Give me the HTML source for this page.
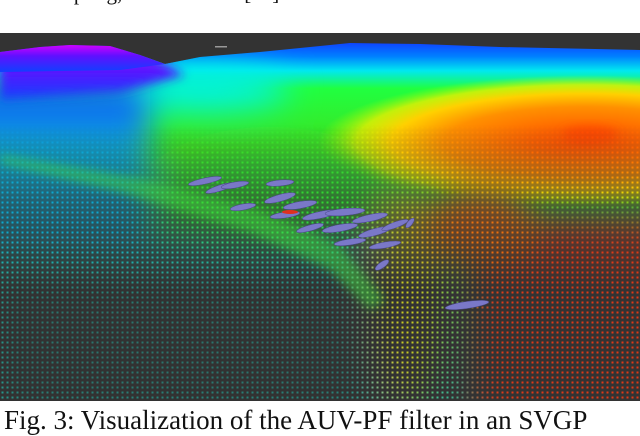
<!DOCTYPE html>
<html><head><meta charset="utf-8"><style>
html,body{margin:0;padding:0;background:#fff;width:640px;height:426px;overflow:hidden}
.t{position:absolute;left:4px;font-family:"Liberation Serif",serif;color:#111;white-space:nowrap}
svg{position:absolute;left:0;top:33px}
</style></head><body>
<div class="t" style="top:-19px;left:-6px;font-size:21px">local sampling, introduced in [15].</div>
<svg width="640" height="368" viewBox="0 33 640 368">
<defs>
<filter id="b" x="-50%" y="-50%" width="200%" height="200%"><feGaussianBlur stdDeviation="16"/></filter>
<filter id="b2" x="-50%" y="-50%" width="200%" height="200%"><feGaussianBlur stdDeviation="5"/></filter>
<clipPath id="s"><path d="M0 52 L40 47 L70 45 L110 46 L140 55 L165 64 L200 57 L260 52 L350 43 L420 44 L500 47 L640 50 L640 401 L0 401Z"/></clipPath>
<pattern id="dk" width="5" height="5" patternUnits="userSpaceOnUse"><path d="M0 0H5V5H0Z M1.5 1.5V3.5H3.5V1.5Z" fill="#333" fill-rule="evenodd"/></pattern>
<linearGradient id="mg" x1="0" y1="0" x2="0" y2="1" gradientUnits="objectBoundingBox"><stop offset="0" stop-color="#000"/><stop offset="0.25" stop-color="#000"/><stop offset="0.45" stop-color="#999"/><stop offset="0.7" stop-color="#fff"/></linearGradient>
<mask id="m" maskUnits="userSpaceOnUse" x="0" y="33" width="640" height="368"><rect x="0" y="33" width="640" height="368" fill="url(#mg)"/></mask>
<linearGradient id="lg" gradientUnits="userSpaceOnUse" x1="0" y1="42" x2="0" y2="400">
<stop offset="0" stop-color="#1040ff"/><stop offset="0.04" stop-color="#0080ff"/><stop offset="0.08" stop-color="#00e8f0"/><stop offset="0.13" stop-color="#20ff40"/><stop offset="0.3" stop-color="#40e020"/><stop offset="0.6" stop-color="#30c060"/><stop offset="1" stop-color="#20b8a8"/></linearGradient>
<radialGradient id="rg" gradientUnits="userSpaceOnUse" cx="0" cy="0" r="110" gradientTransform="translate(585 142) scale(3.2 0.8)">
<stop offset="0" stop-color="#ff5000"/><stop offset="0.15" stop-color="#ff6200"/><stop offset="0.4" stop-color="#ff9000"/><stop offset="0.55" stop-color="#ffd000"/><stop offset="0.65" stop-color="#e8f000" stop-opacity="0.8"/><stop offset="0.76" stop-color="#a0ff00" stop-opacity="0"/></radialGradient>
<linearGradient id="hill" x1="0" y1="0" x2="0" y2="1"><stop offset="0" stop-color="#d000ff"/><stop offset="0.4" stop-color="#6010ff"/><stop offset="1" stop-color="#1040ff"/></linearGradient>
</defs>
<rect x="0" y="33" width="640" height="368" fill="#333"/>
<rect x="215" y="46" width="12" height="1.5" fill="#999"/>
<g clip-path="url(#s)">
<rect x="0" y="33" width="640" height="368" fill="url(#lg)"/>
<rect x="0" y="33" width="640" height="260" fill="url(#rg)"/>
<g filter="url(#b)">
<rect x="-40" y="240" width="430" height="200" fill="#20b8a8"/>
<ellipse cx="200" cy="88" rx="90" ry="22" fill="#00f0e8"/>
<rect x="-40" y="80" width="190" height="60" fill="#1070f0"/>
<rect x="-40" y="130" width="190" height="120" fill="#10a8d0"/>
<ellipse cx="270" cy="200" rx="110" ry="50" fill="#30d830"/>
<ellipse cx="405" cy="300" rx="40" ry="110" fill="#c8c820"/>
<rect x="470" y="220" width="220" height="220" fill="#e03818"/>
<ellipse cx="480" cy="230" rx="60" ry="40" fill="#f07010"/>
</g>
<ellipse cx="590" cy="135" rx="28" ry="8" fill="#ff4a00" filter="url(#b2)"/>
<rect x="0" y="33" width="640" height="368" fill="url(#dk)" mask="url(#m)"/>
<rect x="0" y="280" width="360" height="130" fill="#333" opacity="0.5" filter="url(#b)"/>
<path d="M0 163 L120 192 L250 232 L330 270 L370 310 L385 300 L340 245 L260 210 L140 178 L0 155Z" fill="#40e040" opacity="0.45" filter="url(#b2)"/>
<path d="M0 52 L40 47 L70 45 L110 46 L140 55 L165 64 L185 75 L120 92 L0 100Z" fill="url(#hill)" filter="url(#b2)"/>
<path d="M0 52 L40 47 L70 45 L110 46 L140 55 L165 64 L120 70 L0 72Z" fill="url(#hill)"/>
</g>
<g fill="#7a78c8" stroke="#4a4888" stroke-width="0.5">
<ellipse cx="205" cy="181" rx="17" ry="3" transform="rotate(-12 205 181)"/>
<ellipse cx="220" cy="188" rx="15" ry="3" transform="rotate(-18 220 188)"/>
<ellipse cx="235" cy="185" rx="14" ry="3" transform="rotate(-10 235 185)"/>
<ellipse cx="280" cy="183" rx="14" ry="3" transform="rotate(-5 280 183)"/>
<ellipse cx="243" cy="207" rx="13" ry="3" transform="rotate(-10 243 207)"/>
<ellipse cx="280" cy="198" rx="16" ry="3.5" transform="rotate(-15 280 198)"/>
<ellipse cx="300" cy="205" rx="17" ry="3.5" transform="rotate(-10 300 205)"/>
<ellipse cx="320" cy="215" rx="18" ry="3.5" transform="rotate(-12 320 215)"/>
<ellipse cx="285" cy="215" rx="15" ry="3" transform="rotate(-8 285 215)"/>
<ellipse cx="345" cy="212" rx="20" ry="3.5" transform="rotate(-5 345 212)"/>
<ellipse cx="370" cy="218" rx="18" ry="3.5" transform="rotate(-12 370 218)"/>
<ellipse cx="340" cy="228" rx="18" ry="3.5" transform="rotate(-10 340 228)"/>
<ellipse cx="310" cy="228" rx="14" ry="3" transform="rotate(-15 310 228)"/>
<ellipse cx="375" cy="232" rx="17" ry="3.5" transform="rotate(-15 375 232)"/>
<ellipse cx="350" cy="242" rx="16" ry="3" transform="rotate(-8 350 242)"/>
<ellipse cx="385" cy="245" rx="16" ry="3" transform="rotate(-10 385 245)"/>
<ellipse cx="395" cy="225" rx="14" ry="3" transform="rotate(-20 395 225)"/>
<ellipse cx="410" cy="223" rx="6" ry="2.5" transform="rotate(-50 410 223)"/>
<ellipse cx="382" cy="265" rx="8" ry="3" transform="rotate(-35 382 265)"/>
<ellipse cx="467" cy="305" rx="22" ry="3.5" transform="rotate(-8 467 305)"/>
</g>
<ellipse cx="290" cy="212" rx="8" ry="2" fill="#e03020"/>
</svg>
<div class="t" style="top:405px;font-size:27px">Fig. 3: Visualization of the AUV-PF filter in an SVGP</div>
</body></html>
